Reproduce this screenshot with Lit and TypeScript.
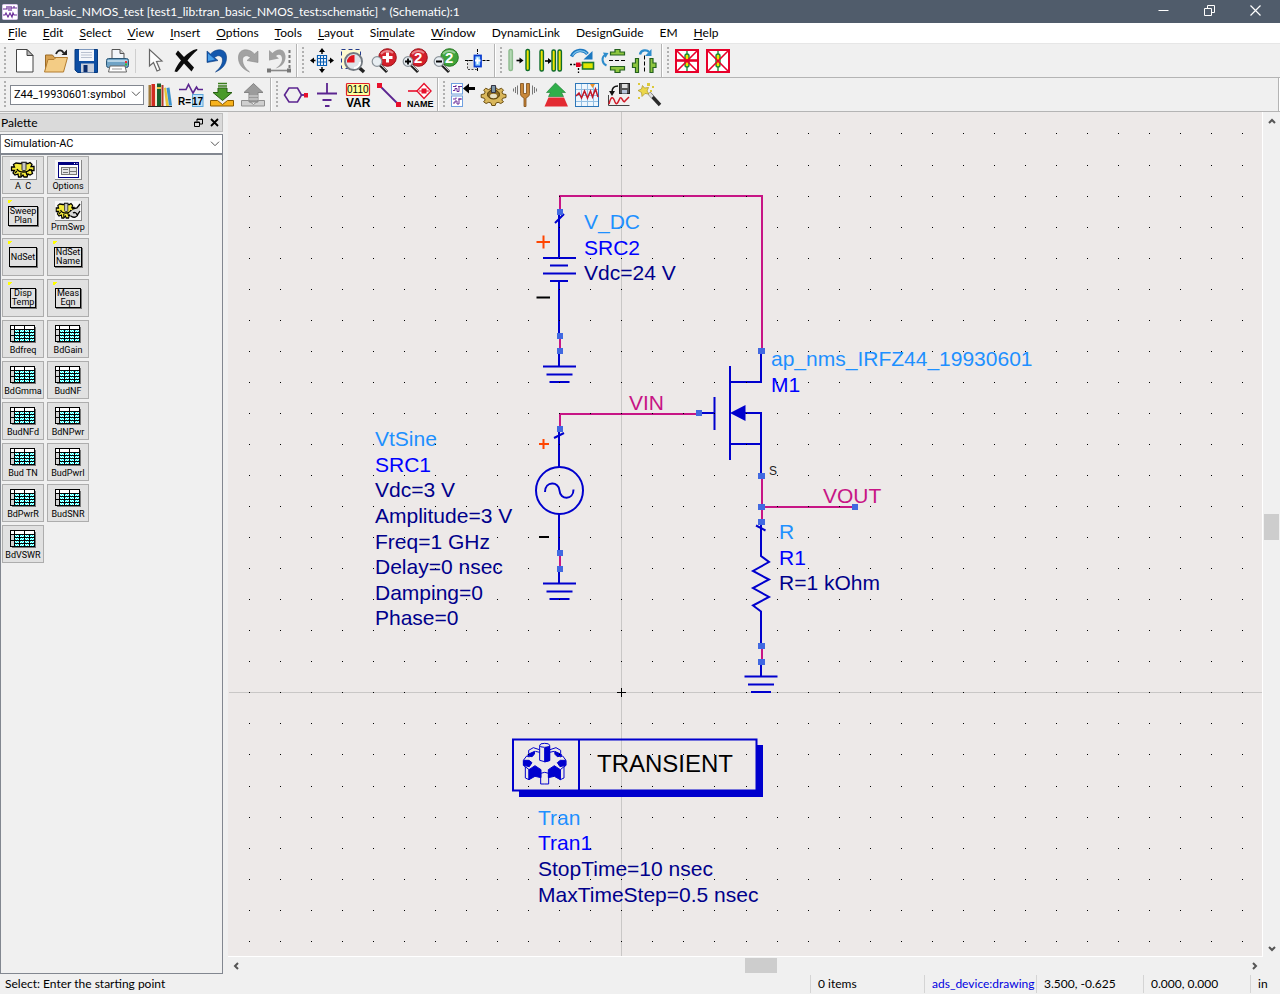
import { LitElement, html, svg, css, TemplateResult } from "lit";
import { customElement, property } from "lit/decorators.js";

type Art = TemplateResult;

/* ---------- shared icon fragments ---------- */

const lens = (fill: string, ring: string, sign: Art) => svg`
  <path d="M9 17l7 7" stroke="#222" stroke-width="3"/>
  <path d="M10 17l6 6" stroke="#bbb" stroke-width="1"/>
  <circle cx="16.5" cy="9.5" r="8.8" fill="${fill}" stroke="${ring}"/>
  <path d="M10 6a8 7 0 0 1 12-1" stroke="#fff" stroke-opacity=".45" stroke-width="2" fill="none"/>
  <circle cx="6" cy="13.5" r="4.8" fill="#e8eef2" stroke="#8a9299" stroke-width="1.2"/>
  ${sign}`;

const rod = (x: number, top: number, height: number, pale = false) => svg`
  <rect x="${x}" y="${top}" width="3.4" height="${height}" rx="1.5"
    fill="${pale ? "#b4d8b4" : "#f1e400"}" stroke="${pale ? "#8dbb8d" : "#0e6b2c"}" stroke-width="1.4"/>`;

const rightArrow = (x: number, y: number) => svg`
  <path d="M${x} ${y}h4" stroke="#000" stroke-width="1.6"/><path d="M${x + 3} ${y - 3}l4 3-4 3z" fill="#000"/>`;

const crossedPart = (bar: boolean) => svg`
  <rect x="2" y="2" width="22" height="22" fill="#fff" stroke="#e8002a" stroke-width="2"/>
  <path d="M13 3v20" stroke="#1b8a35" stroke-width="1.4"/>
  <rect x="11" y="6" width="4" height="13" rx="2" fill="#f1e400" stroke="#1b8a35" stroke-width="1.4"/>
  <path d="M3 3l20 20M23 3L3 23" stroke="#e8002a" stroke-width="1.6"/>
  ${bar ? svg`<path d="M2 12.5h22" stroke="#e8002a" stroke-width="2.6"/>` : ""}`;

const tray = (fill: string, edge: string) => svg`
  <path d="M1.5 18.5h7l5 4 5-4h6v5.5h-23z" fill="${fill}" stroke="${edge}"/>`;

const miniCircuit = (y: number) => svg`
  <rect x="1.5" y="${y}" width="11" height="10.5" fill="#fff" stroke="#6fa0e0"/>
  <path d="M3 ${y + 3}h3v-1.500M3 ${y + 7}h2v-2h2v3h2v-5h3M8 ${y + 3}h3" stroke="#6a2c9a" fill="none"/>`;

const toothedWheel = (fill: string, edge: string) => svg`
  <path d="M10.500 4h4l.6 2.500 2.600 1 2.800-1.300 2 2-1.600 1.800 1 2 3.100.5v3l-3.200.7-1 1.800 1.700 1.800-2.700 1.700-2.700-1.200-2.200.8-.7 2.400h-3.400l-.7-2.400-2.300-.8-2.700 1.200-2.500-1.700 1.600-1.800-1-1.800-3-.7v-3l3-.5 1-2-1.500-1.800 2-2 2.700 1.300 2.700-1z"
    fill="${fill}" stroke="${edge}" stroke-width="1"/>`;

/* ---------- toolbar icons, 25 by 25 ---------- */

const icons: Record<string, Art> = {
  blank: svg`<path d="M5.500 1.500h10.500l6 6v16.500h-16.500z" fill="#fff" stroke="#444"/>
    <path d="M16 1.500v6h6z" fill="#bbb" stroke="#444"/>`,
  open: svg`<path d="M3.500 23V7h7l2 2.500h9v13z" fill="#d8a252" stroke="#9a6a26"/>
    <path d="M2.500 24L6 11.500h6l2-2h11.500l-4 14.500z" fill="#f3cc85" stroke="#b27c30"/>
    <path d="M14 6c2-5 6-4.500 7.500-1" stroke="#222" stroke-width="1.800" fill="none"/><path d="M25 1.500v5.500h-5.500z" fill="#222"/>`,
  save: svg`<path d="M2 1.500h22.500v23h-20l-2.500-2.500z" fill="#0c4da2" stroke="#063a80"/>
    <rect x="6" y="1.500" width="15" height="11.500" fill="#f4f6fb"/><path d="M8 4.500h11M8 7h11M8 9.500h11" stroke="#b8c0d0"/>
    <rect x="8" y="15.500" width="13" height="9" fill="#c9cfdb"/><rect x="10.500" y="17" width="4" height="7" fill="#0b2c6c"/>`,
  print: svg`<path d="M8 1.500h8l4 4v6H8z" fill="#f2f6fa" stroke="#555"/><path d="M16 1.500v4h4" fill="#ccc" stroke="#555"/>
    <rect x="2.500" y="10.500" width="22" height="9" rx="2" fill="#6fa3c6" stroke="#2c5878"/>
    <rect x="3.500" y="12" width="20" height="2" fill="#b5d3e6"/>
    <rect x="21" y="13" width="2" height="2" fill="#e33"/><rect x="21" y="15.500" width="2" height="2" fill="#3b3"/>
    <path d="M6 18h15l1.500 6h-18z" fill="#fff" stroke="#666"/><path d="M8 21h10" stroke="#999"/>`,
  pointer: svg`<path d="M7.500 1.500v16.500l4-3.500 3.500 8.500 3-1.300-3.500-8.200 5.500-.5z" fill="#fdfdfd" stroke="#666" stroke-width="1.200"/>`,
  erase: svg`<path d="M5 2.500l6 6.500C15 5 19 2 24 1l.5 1C20 6 17 9 14.500 12.500l6.500 7-2.500 4-7.500-8c-2.500 3.500-5 6.500-7 8.500l-2.500-.5C3 19 5.500 15.500 8 12.500L2.500 6z" fill="#0c0c0c"/>`,
  undo: svg`<path d="M3 3v11.500l11-2-3.500-3c4-3.500 8-1.500 8 2.500 0 5-3.500 9-7 12C17.500 21.500 23 16.500 22.500 9 22 0 12 0 6.500 6z" fill="#1458ad" stroke="#0b3c80" stroke-width=".6"/>
    <path d="M4 5.500v7.500l7-1.500z" fill="#4aa0ea"/>`,
  redo: svg`<path d="M23 3v11.500l-11-2 3.500-3c-4-3.500-8-1.500-8 2.500 0 5 3.500 9 7 12C8.500 21.500 3 16.500 3.500 9 4 0 14 0 19.500 6z" fill="#a2a2a2" stroke="#8c8c8c" stroke-width=".6"/>`,
  undoAll: svg`<path d="M3 2v10.500l10-2-3-2.500c3-2.500 6-1 6 3 0 4-3 7-6.500 9.500C16 19 20 14 19.500 8 18.500 0 11 0 6.500 5z" fill="#a0a0a0"/>
    <path d="M23.500 2v20" stroke="#777" stroke-width="2" stroke-dasharray="3 2"/><path d="M3 22.500h20" stroke="#888" stroke-width="1.600"/>
    <rect x="1" y="20.500" width="4" height="4" fill="#777"/><rect x="21" y="20.500" width="4" height="4" fill="#777"/>`,
  pan: svg`<path d="M8.500 7.500h9v10h-9z" fill="#fff"/><path d="M8.500 7v11M11.500 7v11M14.500 7v11M17.500 7v11M8 7.500h10M8 10.500h10M8 14h10M8 17.500h10" stroke="#0a5fb4" stroke-width="1.200"/>
    <path d="M13 6V3M13 19v3M6.500 12.500h-3M19.500 12.500h3" stroke="#000" stroke-width="1.400"/>
    <path d="M13 0l3 4h-6zM13 25l3-4h-6zM1 12.500l4-3v6zM25 12.500l-4-3v6z" fill="#000"/>`,
  zoomArea: svg`<rect x="1.500" y="1.500" width="19" height="19" fill="#fdfbd0" stroke="#223a8c" stroke-dasharray="4 3"/>
    <path d="M18.500 19l5.500 5" stroke="#222" stroke-width="3.400"/>
    <circle cx="13.500" cy="13.500" r="8.500" fill="#dfe5ea" stroke="#747b82" stroke-width="2"/>
    <path d="M14.500 14.500V7a7 7 0 0 0-7.500 7.500z" fill="#e3131b"/><path d="M14 20a6 6 0 0 0 6-6" stroke="#fff" stroke-width="2" fill="none"/>`,
  zoomIn: lens("#d3202a", "#9b1018", svg`<path d="M16.500 4.500v10M11.500 9.500h10" stroke="#fff" stroke-width="3"/>`),
  zoomInTwo: lens("#d3202a", "#9b1018", svg`<text class="digit" x="12" y="15">2</text><path d="M6 10.500v6M3 13.500h6" stroke="#000" stroke-width="1.800"/>`),
  zoomOutTwo: lens("#3fa33a", "#25761f", svg`<text class="digit" x="12" y="15">2</text><path d="M3 13.500h6" stroke="#000" stroke-width="2"/>`),
  centre: svg`<rect x="3.500" y="12.500" width="9" height="9" fill="#e2e2e2" stroke="#444" stroke-dasharray="2 1.500"/>
    <path d="M13.500 1v5M13.500 20v4M1 12.500h7M18.500 12.500h7" stroke="#000" stroke-dasharray="3 1"/>
    <rect x="10.500" y="7.500" width="6.500" height="11" fill="#8fd0ff" stroke="#0a3ed0" stroke-width="1.800"/>
    <path d="M11 12.500h5.500M13.500 9.500v6.500" stroke="#fff" stroke-width="1.800"/>`,
  moveRod: svg`${rod(2, 1.5, 21, true)}${rightArrow(9.5, 12.5)}${rod(19, 1.5, 21)}`,
  copyRods: svg`${rod(2, 2, 21)}${rightArrow(7, 13)}${rod(14, 2, 21)}${rod(20, 2, 21)}`,
  rotate: svg`<path d="M2.500 8.500C6 1 15 1 18.500 6" stroke="#1c78c0" stroke-width="3.400" fill="none"/><path d="M3.500 7.500C7 2 14 1.500 18 5.500" stroke="#7fc4ee" stroke-width="1.200" fill="none"/>
    <path d="M23.500 3v8.500h-9z" fill="#1c78c0"/><path d="M1 16.500h6M9.500 20v5" stroke="#000" stroke-width="1.300" stroke-dasharray="2 1.500"/>
    <rect x="7" y="14.500" width="4.500" height="4.500" fill="#e00020"/><path d="M11 17h3" stroke="#a00" stroke-width="1.200"/>
    <rect x="13.500" y="14.500" width="11" height="6.500" fill="#dfe600" stroke="#1d7a2c" stroke-width="1.600"/>`,
  flipVertical: svg`<path d="M6.500 17.500C1.500 15 1.500 9 5 7" stroke="#2d8ccc" stroke-width="2" fill="none"/><path d="M3 4.500l5.500.5-3 5z" fill="#2d8ccc"/>
    <path d="M10.500 7v-3h4.500v-2.500h5v2.500h4.500v3zM10.500 18.500v3.500h4.500v2.500h5v-2.500h4.500v-3.500z" fill="#8ec63f" stroke="#24611f" stroke-width="1.200"/>
    <path d="M9 12.500h16" stroke="#000" stroke-dasharray="4 2"/>`,
  flipHorizontal: svg`<path d="M9 6.500C10 1.500 16 1.500 18 4" stroke="#2d8ccc" stroke-width="2.400" fill="none"/><path d="M20.500 1v7h-6.500z" fill="#2d8ccc"/>
    <path d="M7.500 10.500v14h-3v-5h-3v-4.500h3v-4.500zM19 10.500v14h3v-5h3v-4.500h-3v-4.500z" fill="#8ec63f" stroke="#24611f" stroke-width="1.200"/>
    <path d="M13.500 7.500v17" stroke="#000" stroke-dasharray="4 2"/>`,
  deactivate: crossedPart(true),
  shortPart: crossedPart(false),
  library: svg`<rect x="1.500" y="3" width="2.500" height="21" fill="#a07a3a"/><rect x="4.500" y="2" width="3.500" height="22" fill="#d02c20"/>
    <rect x="8" y="4" width="1.500" height="20" fill="#f0e8c8"/><rect x="10" y="1.500" width="4" height="22.500" fill="#14602c"/><rect x="10" y="5" width="4" height="2" fill="#e4c84a"/>
    <rect x="14.500" y="3" width="2" height="21" fill="#b5382a"/><path d="M17 6l2-.5 3 18.500h-3z" fill="#e6c63a"/><path d="M19.500 6l3-.5 2.500 18h-3z" fill="#3b92cc"/><path d="M1 24.500h24" stroke="#222"/>`,
  valueEdit: svg`<path d="M1 7.500h7l2.500-5 4.500 8.500 3.500-6 1.500 2.500h5" stroke="#5b2590" stroke-width="1.600" fill="none"/>
    <rect x="14.500" y="12.500" width="10.500" height="12" fill="#bfe2f8" stroke="#5aa4d8"/><text class="tag" x="0" y="23">R=</text><text class="tag" x="14" y="23">17</text>`,
  pushInto: svg`${tray("#f7b21c", "#8a5a00")}<path d="M9 1.500h9M9 4h9" stroke="#3b7d1c" stroke-width="1.600"/><path d="M9 6h9v4.500h5l-9.500 8-9.500-8h5z" fill="#4a9a2a" stroke="#285f12"/>`,
  popOut: svg`${tray("#cfcfcf", "#8e8e8e")}<path d="M9 20v-9.500h-5l9.500-9 9.500 9h-5v9.500z" fill="#9b9b9b" stroke="#858585"/><path d="M9 14h9M9 17h9" stroke="#ddd"/>`,
  port: svg`<path d="M6 6h8.500l4 7-4 7h-8.500l-4.500-7z" fill="none" stroke="#5b2590" stroke-width="1.600"/><path d="M18.500 13h4" stroke="#5b2590" stroke-width="1.800"/><rect x="21" y="11" width="4" height="4.500" fill="#e8102c"/>`,
  ground: svg`<path d="M13 1v10.500M3 11.500h20M8.500 18h9M11 24h4.500" stroke="#5b2590" stroke-width="1.800"/>`,
  variable: svg`<rect x="1.500" y="1.500" width="23" height="12" rx="1" fill="#ffff9e" stroke="#e0202c" stroke-width="1.200"/><text class="bits" x="2" y="11">0110</text><text class="caption" x="1" y="25">VAR</text>`,
  wire: svg`<path d="M4 4l18 18" stroke="#5b2590" stroke-width="1.800"/><rect x="1" y="1" width="5" height="5" fill="#e8102c"/><rect x="20" y="20" width="5" height="5" fill="#e8102c"/>`,
  wireName: svg`<path d="M1 9h11" stroke="#e8102c" stroke-width="1.600"/><path d="M17 1.500l7 7.500-7 7.500-7-7.500z" fill="#fff" stroke="#e8102c" stroke-width="1.400"/><rect x="14.500" y="6.500" width="5" height="5" fill="#e8102c"/><path d="M12 9h10" stroke="#e8102c"/>
    <text class="small-caption" x="0" y="25">NAME</text>`,
  insertTemplate: svg`${miniCircuit(1.5)}${miniCircuit(14)}<path d="M13 6.500l6-5v3.500h6v3h-6v3.500z" fill="#000"/>`,
  simulate: svg`${toothedWheel("#d9b75c", "#6b4e12")}<ellipse cx="12.500" cy="12.500" rx="6" ry="4.500" fill="#8b6a22" stroke="#4d3808"/><ellipse cx="12.500" cy="14" rx="3.500" ry="2.200" fill="#e8e0c4"/><path d="M10.500 3.500h4v7h-4z" fill="#7d97a8" stroke="#334"/>`,
  tune: svg`<path d="M8.500 1.500v10c0 3 2 3.500 3.500 4.500v8.500h2v-8.500c1.500-1 3.500-1.500 3.500-4.500V1.500h-3v10h-3V1.500z" fill="#c8873a" stroke="#7c4d16" stroke-width=".8"/>
    <path d="M5.500 3.500v9M3.500 5v6M1.500 6.500v3M20.500 3.500v9M22.500 5v6M24.500 6.500v3" stroke="#777"/>`,
  optimise: svg`<path d="M12.500 1l10 9.500h-4l2 4H5.500l2-4h-4z" fill="#2fae4a" stroke="#1b7a30" stroke-width=".6"/><path d="M5.500 15.500h15.500l4 9H1.500z" fill="#e32a32"/>`,
  chart: svg`<rect x="1.500" y="1.500" width="23" height="23" fill="#eef6fd" stroke="#2d76b8"/><path d="M7.500 2v22M13.500 2v22M19.500 2v22M2 7.500h22M2 13.500h22M2 19.500h22" stroke="#93bfe3"/>
    <path d="M2 14l3-3 2.500 5 3-7 3 7 3-7 2 6 3-8 2.500 8" stroke="#c01828" stroke-width="1.500" fill="none"/><path d="M16 2h5l-2.500 4z" fill="#f0922a"/>`,
  dataSave: svg`<path d="M3.500 13v10.500h21" stroke="#444" fill="none"/><path d="M4 22c2-8 4-8 6-2 2 4 3 0 5-4 2-2 3 6 5 3l4-4" stroke="#d21a28" stroke-width="1.500" fill="none"/>
    <rect x="14.500" y="1.500" width="10" height="10" fill="#555" stroke="#222"/><rect x="17" y="2" width="5.500" height="4" fill="#ddd"/><rect x="17" y="8" width="5" height="3.500" fill="#b8c6dc"/>
    <path d="M13 4c-5 0-6 3-6 6" stroke="#111" stroke-width="1.500" fill="none"/><path d="M4 9h6l-3 5z" fill="#111"/>`,
  wand: svg`<path d="M13 11l11 12" stroke="#2a2a2a" stroke-width="3.400"/><path d="M13 11l3.500 4" stroke="#ddd" stroke-width="3"/>
    <path d="M6.500 3.500l2 2.500 4-.5-1.500 3.500 2 3-4-.5-3 3-.5-4-3.500-2 3.500-1.500z" fill="#ecd74a" stroke="#a8932a" stroke-width=".7"/>
    <path d="M11 1h3v3h-3zM16 4h2v2h-2zM2 1h2v2h-2zM2 15h2v2h-2zM14 8h2v2h-2z" fill="#dcc93a"/>`,
};

/* ---------- palette pictures ---------- */

const sunkenCog = svg`<rect x="0" y="0" width="26" height="19" fill="#f7f7f7"/><path d="M0 19.500h27M26.500 0v20" stroke="#888"/>`;
const cog = svg`
  <path d="M10 3.500h2v-1h4v1h2l2-1 2 2-1 2h3v4h-2.500l1 3-2.500 1.500-2-1-1 3h-3l-1-2-2 2h-2.500l-.5-3-3 1-2-2 1.500-2.500h-3v-3.500h3l-1-2.500 2.500-1.500z" fill="#f4ea3c" stroke="#000" stroke-width="1.300"/>
  <path d="M7 9c2 4 11 4 13 0" stroke="#000" stroke-width="1.500" fill="none"/><path d="M5 13l2-2M11 16v-3M17 15l-1-3M22 10h-3" stroke="#000" stroke-width="1.300"/>
  <rect x="12" y="2.500" width="4" height="8" rx="1" fill="#c8c8c8" stroke="#333"/>`;

const pictures: Record<string, Art> = {
  gear: svg`${sunkenCog}${cog}`,
  sweep: svg`${sunkenCog}<g transform="translate(0 0) scale(.8 1)">${cog}</g><path d="M14 12l6-5 5-4v9l-3 4-5 1z" fill="#d8d8d8"/><path d="M17 8l5-1 3-4M16 15a4 3.500 0 0 0 7-2l2-3M18 12a2.500 2.500 0 0 1 4 2" stroke="#000" fill="none" stroke-width="1.300"/>`,
  window: svg`${sunkenCog}<rect x="3.500" y="2.500" width="20" height="15" fill="#fff" stroke="#000080"/><rect x="3" y="2" width="21" height="3" fill="#000080"/><path d="M19 3.500h1M21.500 3.500h1" stroke="#fff"/>
    <rect x="6.500" y="7.500" width="15" height="7" fill="#e4e4e4" stroke="#777"/><path d="M14.500 7.500v7M8 9.500h5M8 12.500h5M15 11.500h6" stroke="#777"/>`,
};

const tablePicture = svg`
  <path d="M2 17.500h24M25.500 2v16" stroke="#777"/>
  <rect x=".5" y=".5" width="24" height="16" fill="#d4d4d4" stroke="#000"/>
  <rect x="1" y="1" width="23" height="3" fill="#fff"/>
  <rect x="5" y="5" width="19" height="11" fill="#00ffff"/>
  <path d="M5 5.500h19M5 8.500h19M5 11.500h19M5 14.500h19" stroke="#fff" stroke-dasharray="1 1"/>
  <path d="M6 6.500h18M6 9.500h18M6 12.500h18M6 15.500h18" stroke="#fff" stroke-dasharray="1 1"/>
  <path d="M0 4.500h25M5 7.500h20M0 10.500h25M5 13.500h20M4.500 0v17M9.500 4v13M14.500 0v17M19.500 4v13" stroke="#000"/>`;

interface PaletteItem { kind: "picture" | "table" | "box"; label: string; art?: string; }

const paletteItems: PaletteItem[] = [
  { kind: "picture", label: "A  C", art: "gear" }, { kind: "picture", label: "Options", art: "window" },
  { kind: "box", label: "Sweep\nPlan" }, { kind: "picture", label: "PrmSwp", art: "sweep" },
  { kind: "box", label: "NdSet" }, { kind: "box", label: "NdSet\nName" },
  { kind: "box", label: "Disp\nTemp" }, { kind: "box", label: "Meas\nEqn" },
  ...["Bdfreq", "BdGain", "BdGmma", "BudNF", "BudNFd", "BdNPwr", "Bud TN", "BudPwrI", "BdPwrR", "BudSNR", "BdVSWR"]
    .map((label): PaletteItem => ({ kind: "table", label })),
];

/* ---------- window frame parts ---------- */

@customElement("title-bar")
class TitleBar extends LitElement {
  static styles = css`
    :host { display: flex; align-items: center; height: 23px; background: #505c6b; color: #fff; font: 12px/16px Lato, "Open Sans", sans-serif; }
    .badge { width: 16px; height: 16px; margin: 0 5px 0 2px; }
    .title { flex: 1; white-space: pre; overflow: hidden; }
    button { width: 46px; height: 23px; padding: 0 0 2px; border: 0; background: none; }
    .buttons { display: flex; padding-right: 2px; }
    .glyph { width: 11px; height: 11px; fill: none; stroke: #fff; display: block; margin: auto; }
  `;
  render() {
    return html`
      <svg class="badge" viewBox="0 0 16 16" aria-hidden="true"><rect x=".5" y=".5" width="15" height="15" rx="1" fill="#fff" stroke="#d8c8ea"/>
        <path d="M1 5h4V2M7 2v5M9 2v5M9 4h3V2M12 4h3M1 11h2l1-2 2 4 2-4 2 4 1-4 1 2h3" stroke="#6a2c9a" stroke-width="1.200" fill="none"/></svg>
      <span class="title">tran_basic_NMOS_test [test1_lib:tran_basic_NMOS_test:schematic] * (Schematic):1</span>
      <div class="buttons">
        <button aria-label="Minimize"><svg class="glyph" viewBox="0 0 11 11"><path d="M.5 5.500h10"/></svg></button>
        <button aria-label="Restore"><svg class="glyph" viewBox="0 0 11 11"><path d="M.5 3.500h7v7h-7zM3.500 3v-2.500h7v7H8"/></svg></button>
        <button aria-label="Close"><svg class="glyph" viewBox="0 0 11 11"><path d="M.5.5l10 10M10.500.5l-10 10" stroke-width="1.200"/></svg></button>
      </div>`;
  }
}

@customElement("menu-bar")
class MenuBar extends LitElement {
  static styles = css`
    :host { display: flex; height: 20px; background: #fff; border-bottom: 1px solid #e6e6e6; }
    button { height: 20px; padding: 0 8px; border: 0; background: none; color: #000; font: 12px/20px Lato, "Open Sans", sans-serif; white-space: nowrap; }
    u { text-underline-offset: 2px; }
  `;
  private entries: [string, string, string][] = [
    ["", "F", "ile"], ["", "E", "dit"], ["", "S", "elect"], ["", "V", "iew"], ["", "I", "nsert"], ["", "O", "ptions"], ["", "T", "ools"],
    ["", "L", "ayout"], ["Si", "m", "ulate"], ["", "W", "indow"], ["DynamicLink", "", ""], ["DesignGuide", "", ""], ["EM", "", ""], ["", "H", "elp"],
  ];
  render() {
    return this.entries.map(([before, key, after]) => html`<button>${before}<u>${key}</u>${after}</button>`);
  }
}

@customElement("tool-strip")
class ToolStrip extends LitElement {
  @property({ attribute: false }) names: string[] = [];
  static styles = css`
    :host { display: flex; height: 33px; align-items: center; padding-right: 2px; border-right: 1px solid #b4b4b4; box-shadow: 1px 0 #fff; margin-right: 1px; }
    :host([last]) { flex: 1; }
    :host([plain]) { border-right: 0; box-shadow: none; }
    .grip { width: 2px; height: 27px; margin: 0 2px 0 4px; background: repeating-linear-gradient(#b0b0b0 0 2px, transparent 2px 4px); }
    button { width: 31px; height: 33px; padding: 4px 3px; border: 0; background: none; flex: none; }
    .icon { display: block; width: 25px; height: 25px; overflow: visible; fill: none; }
    .rule { width: 1px; height: 24px; margin: 0 3px; background: #cfcfcf; }
    .icon text { fill: #000; font-family: "Liberation Sans", sans-serif; font-weight: bold; }
    .icon .digit { fill: #fff; font-size: 15px; }
    .icon .tag { font-size: 10px; }
    .icon .bits { font-size: 10px; font-weight: normal; }
    .icon .caption { font-size: 12px; }
    .icon .small-caption { font-size: 9px; }
  `;
  render() {
    return html`<span class="grip"></span><slot></slot>${this.names.map((name) =>
      name === "|" ? html`<span class="rule"></span>`
        : html`<button aria-label=${name}><svg class="icon" viewBox="0 0 25 25" aria-hidden="true">${icons[name]}</svg></button>`)}`;
  }
}

@customElement("drop-list")
class DropList extends LitElement {
  @property() value = "";
  @property() label = "";
  static styles = css`
    :host { display: block; position: relative; }
    select { appearance: none; width: 100%; height: 20px; padding: 0 14px 0 3px; border: 1px solid #828790; border-radius: 0; background: #fff; color: #000; font: 11px/16px Roboto, "Open Sans", sans-serif; overflow: hidden; }
    .chevron { position: absolute; right: 3px; top: 7px; width: 10px; height: 6px; fill: none; stroke: #555; pointer-events: none; }
  `;
  render() {
    return html`<select aria-label=${this.label}><option>${this.value}</option></select>
      <svg class="chevron" viewBox="0 0 10 6" aria-hidden="true"><path d="M1 .7l4 4 4-4"/></svg>`;
  }
}

@customElement("palette-panel")
class PalettePanel extends LitElement {
  static styles = css`
    :host { display: flex; flex-direction: column; color: #000; font: 12px/18px Lato, "Open Sans", sans-serif; }
    .head { display: flex; align-items: center; height: 17px; margin: 1px 0 2px; background: #dadada; border: 1px solid #bdbdbd; border-left: 0; }
    .name { flex: 1; padding-left: 1px; }
    .head button { width: 16px; height: 16px; padding: 0; border: 0; background: none; }
    .glyph { display: block; margin: auto; width: 9px; height: 9px; fill: none; stroke: #000; }
    .list { flex: 1; display: grid; grid-template-columns: repeat(auto-fill, 42px); grid-auto-rows: 38px; gap: 3px; align-content: start; padding: 1px 100px 0 1px; border: 1px solid #828790; }
    .item { position: relative; display: flex; flex-direction: column; align-items: center; padding: 4px 0 0; border: 1px solid #adadad; background: #e1e1e1; color: #000; font: 9px/10px Roboto, "Liberation Sans", sans-serif; white-space: pre; }
    .item.picture { padding-top: 3px; }
    .item.box { padding: 0; justify-content: center; }
    .item.box::before { content: ""; position: absolute; left: 5px; top: 2px; width: 4px; height: 3px; background: linear-gradient(135deg, #ffff00 60%, transparent 60%); }
    .art { width: 27px; height: 20px; fill: none; flex: none; }
    .table .art { height: 19px; }
    .caption { margin-top: 1px; }
    .frame { padding: 0 1px; border: 1px solid #000; box-shadow: 1px 1px #777; line-height: 9px; min-height: 18px; display: grid; align-content: center; }
  `;
  private item(entry: PaletteItem) {
    if (entry.kind === "box") return html`<button class="item box"><span class="frame">${entry.label}</span></button>`;
    const art = entry.kind === "table" ? tablePicture : pictures[entry.art!];
    const view = entry.kind === "table" ? "0 0 27 19" : "0 0 27 20";
    return html`<button class="item ${entry.kind}"><svg class="art" viewBox=${view} aria-hidden="true">${art}</svg><span class="caption">${entry.label}</span></button>`;
  }
  render() {
    return html`
      <div class="head"><span class="name">Palette</span>
        <button aria-label="Float"><svg class="glyph" viewBox="0 0 9 9"><path d="M.5 4h5v4.500h-5zM3 3.500v-2.500h5.500v5H6M.5 4.500h5M3 1.500h5.500"/></svg></button>
        <button aria-label="Close"><svg class="glyph" viewBox="0 0 9 9"><path d="M1 1l7 7M8 1l-7 7" stroke-width="1.800"/></svg></button></div>
      <drop-list label="Palette group" value="Simulation-AC"></drop-list>
      <div class="list">${paletteItems.map((entry) => this.item(entry))}</div>`;
  }
}

/* ---------- schematic ---------- */

const origin = { x: 621, y: 692 };
const gridPitch = 31.05;

const ground = (x: number, y: number) => svg`
  <path class="part" d="M${x - 16.5} ${y}h33M${x - 13} ${y + 8}h26M${x - 10} ${y + 15.5}h20"/>`;

const pins: [number, number][] = [
  [560, 212], [560, 336], [560, 351], [761, 351], [560, 429], [699, 413], [560, 553], [560, 569],
  [761, 476], [761, 507], [855, 507], [761, 522], [761, 646], [761, 662],
];

const notes: { x: number; rows: [number, string, string][] }[] = [
  { x: 584, rows: [[229, "kind", "V_DC"], [255, "name", "SRC2"], [280, "param", "Vdc=24 V"]] },
  { x: 771, rows: [[366, "kind", "ap_nms_IRFZ44_19930601"], [392, "name", "M1"]] },
  { x: 375, rows: [[446, "kind", "VtSine"], [472, "name", "SRC1"], [497, "param", "Vdc=3 V"], [523, "param", "Amplitude=3 V"], [549, "param", "Freq=1 GHz"],
    [574, "param", "Delay=0 nsec"], [600, "param", "Damping=0"], [625, "param", "Phase=0"]] },
  { x: 779, rows: [[539, "kind", "R"], [565, "name", "R1"], [590, "param", "R=1 kOhm"]] },
  { x: 538, rows: [[825, "kind", "Tran"], [850, "name", "Tran1"], [876, "param", "StopTime=10 nsec"], [902, "param", "MaxTimeStep=0.5 nsec"]] },
  { x: 629, rows: [[410, "net", "VIN"]] },
  { x: 823, rows: [[503, "net", "VOUT"]] },
];

const halfCog = svg`
  <path d="M119 97l-13-3M86 101v-10l14-8 18 6" fill="none"/>
  <path d="M84 103l20-9-1 9-7 7-12-2zM71 121h16l9 7-8 12-17-4z" fill="#0000cd"/>
  <path d="M70 121l10-13 8 3M76 140v34l11 5v-30zM70 122v14l6 5M122 160v32h12M122 160l12-3"/>
  <path d="M87 149l18-12 18 12v24l-18-4-18 10z" fill="#0000cd"/>`;

@customElement("schematic-canvas")
class SchematicCanvas extends LitElement {
  static styles = css`
    :host { display: block; background: #ede9e8; overflow: hidden; }
    .sheet { display: block; width: 100%; height: 100%; }
    .sheet text { font: 21px "Liberation Sans", sans-serif; }
    .axis { stroke: #c9c7c6; fill: none; }
    .net-line { stroke: #c71585; stroke-width: 2; fill: none; }
    .part { stroke: #0000cd; stroke-width: 2; fill: none; }
    .solid { fill: #0000cd; }
    .pin { fill: #4169e1; }
    .sheet .kind { fill: #1e90ff; }
    .sheet .name { fill: #0000ff; }
    .sheet .param { fill: #00008b; }
    .sheet .net { fill: #c71585; }
    .sheet .banner { font-size: 24px; fill: #000; }
    .sheet .terminal { font-size: 12px; fill: #222; }
    .plus { stroke: #ff4500; stroke-width: 2; }
    .minus { stroke: #000; stroke-width: 2; }
    .cog { stroke: #0000cd; stroke-width: 3; fill: none; }
  `;
  private dots() {
    let path = "";
    for (let row = -18; row <= 40; row++) {
      for (let column = -12; column <= 60; column++) {
        path += `M${Math.round(origin.x + 0.3 + gridPitch * column)} ${Math.round(origin.y + 0.35 + gridPitch * row)}h1v1h-1z`;
      }
    }
    return svg`<path d=${path}/>`;
  }
  render() {
    return html`<svg class="sheet" role="img" aria-label="Schematic"><g transform="translate(-228 -112)">
      <path class="axis" d="M621.500 112V4000M229 692.500H4000"/>
      <path class="net-line" d="M560 212V196H762V351M560 336v15M700 414H560v15M560 553v16M762 476v46M762 507h93M762 646v16"/>
      <path class="part" d="M559 212v46M543 258h33M550 265.500h18M543 273.500h33M550 281h18M559 281v55M559 351v15M555 223l9-9"/>
      <path class="part" d="M559 429v38M559 514v39M559 569v14M554 438l10-5"/>
      <circle class="part" cx="559.500" cy="490.500" r="23.500"/>
      <path class="part" d="M545 492c0-11 14-11 14.500-1.500s14 10 14-1"/>
      <path class="part" d="M761 351v31h-31M730 366v94M714.500 397v33M699 413h15M745 413h16v63M730 444h31"/>
      <path class="solid" d="M730 413l15.500-8v16z"/>
      <path class="part" d="M761 522v34l8 6-16 9 16 8.500-16 8.500 16 9-16 8.500 8 6V646M761 662v14M756 525.500l9.500 5"/>
      ${ground(559.5, 366.5)}${ground(559.5, 583.5)}${ground(761, 676.5)}
      <path class="plus" d="M536.500 242h13.500M543.500 235.500v13M539 444h10M543.500 439v10"/>
      <path class="minus" d="M536.500 297.500h13.500M539 537h10"/>
      <path class="solid" d="M757 745h6v52H519v-7h238z"/>
      <path class="part" d="M513 739.500h243.500V790.500H513zM579 739v51"/>
      <g class="cog" transform="translate(500 720) scale(.3333)">
        ${halfCog}<g transform="translate(268 0) scale(-1 1)">${halfCog}</g>
        <path d="M119 77v44q15 8 30 0v-44"/><ellipse cx="134" cy="76" rx="15" ry="6"/><path d="M134 84l15-4v42l-15 4z" fill="#0000cd"/>
      </g>
      ${this.dots()}
      <path d="M617 692.500h9M621.500 688v9" stroke="#000" fill="none"/>
      ${pins.map(([x, y]) => svg`<rect class="pin" x=${x - 3} y=${y - 3} width=${x === 761 ? 7 : 6} height="6"/>`)}
      ${notes.map((note) => note.rows.map(([y, tone, words]) => svg`<text class=${tone} x=${note.x} y=${y}>${words}</text>`))}
      <text class="banner" x="597" y="772">TRANSIENT</text>
      <text class="terminal" x="769" y="475">S</text>
    </g></svg>`;
  }
}

/* ---------- application ---------- */

@customElement("app-root")
class AppRoot extends LitElement {
  static styles = css`
    :host { display: flex; flex-direction: column; height: 100vh; background: #f0f0f0; color: #000; overflow: hidden; }
    .row { display: flex; border-bottom: 1px solid #b4b4b4; flex: none; }
    .symbol { width: 134px; margin-left: 2px; }
    .body { flex: 1; min-height: 0; display: grid; grid-template-columns: 223px 1fr; column-gap: 5px; }
    .view { display: grid; grid-template: 1fr 17px / 1fr 17px; min-width: 0; min-height: 0; }
    .view schematic-canvas { border: solid #fff; border-width: 0 1px 1px 0; min-width: 0; }
    .scroll { display: flex; align-items: center; }
    .vertical { flex-direction: column; }
    .scroll button { width: 16px; height: 17px; padding: 0; border: 0; background: none; flex: none; }
    .arrow { display: block; margin: auto; width: 8px; height: 8px; fill: none; stroke: #555; stroke-width: 2; }
    .track { flex: 1; display: flex; }
    .vertical .track { flex-direction: column; }
    .before { flex: 50; }
    .after { flex: 47; }
    .vertical .before { flex: 49; }
    .vertical .after { flex: 51; }
    .thumb { background: #cdcdcd; flex: none; width: 32px; height: 15px; }
    .vertical .thumb { width: 15px; height: 26px; }
    .status { display: flex; align-items: center; height: 20px; flex: none; font: 12px/18px Lato, "Open Sans", sans-serif; white-space: nowrap; }
    .message { flex: 1; padding-left: 5px; }
    .cell { box-sizing: border-box; width: 107px; padding-left: 7px; border-left: 1px solid #d4d4d4; line-height: 18px; }
    .cell.count { width: 114px; }
    .cell.layer { width: 112px; color: #0000e0; }
    .cell.unit { width: 30px; }
  `;
  private arrow(label: string, path: string) {
    return html`<button aria-label=${label}><svg class="arrow" viewBox="0 0 8 8"><path d=${path}/></svg></button>`;
  }
  render() {
    return html`
      <title-bar></title-bar>
      <menu-bar></menu-bar>
      <div class="row">
        <tool-strip .names=${["blank", "open", "save", "print", "|", "pointer", "erase", "undo", "redo", "undoAll"]}></tool-strip>
        <tool-strip .names=${["pan", "zoomArea", "zoomIn", "zoomInTwo", "zoomOutTwo", "centre"]}></tool-strip>
        <tool-strip .names=${["moveRod", "copyRods", "rotate", "flipVertical", "flipHorizontal"]}></tool-strip>
        <tool-strip last plain .names=${["deactivate", "shortPart"]}></tool-strip>
      </div>
      <div class="row">
        <tool-strip .names=${["library", "valueEdit", "pushInto", "popOut"]}><drop-list class="symbol" label="Component" value="Z44_19930601:symbol"></drop-list></tool-strip>
        <tool-strip .names=${["port", "ground", "variable", "wire", "wireName"]}></tool-strip>
        <tool-strip last .names=${["insertTemplate", "simulate", "tune", "optimise", "chart", "dataSave", "wand"]}></tool-strip>
      </div>
      <div class="body">
        <palette-panel></palette-panel>
        <div class="view">
          <schematic-canvas></schematic-canvas>
          <div class="scroll vertical">
            ${this.arrow("Scroll up", "M1 6l3-3 3 3")}
            <div class="track"><span class="before"></span><span class="thumb"></span><span class="after"></span></div>
            ${this.arrow("Scroll down", "M1 2l3 3 3-3")}
          </div>
          <div class="scroll">
            ${this.arrow("Scroll left", "M6 1l-3 3 3 3")}
            <div class="track"><span class="before"></span><span class="thumb"></span><span class="after"></span></div>
            ${this.arrow("Scroll right", "M2 1l3 3-3 3")}
          </div>
        </div>
      </div>
      <div class="status">
        <span class="message">Select: Enter the starting point</span>
        <span class="cell count">0 items</span><span class="cell layer">ads_device:drawing</span>
        <span class="cell">3.500, -0.625</span><span class="cell">0.000, 0.000</span><span class="cell unit">in</span>
      </div>`;
  }
}
